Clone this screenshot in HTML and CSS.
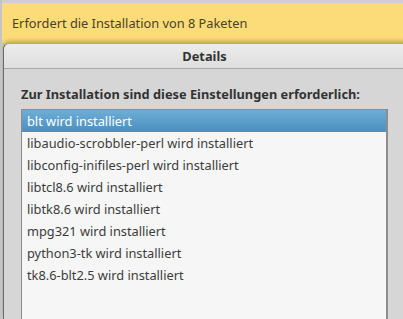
FILE: index.html
```html
<!DOCTYPE html>
<html lang="de">
<head>
    <meta charset="UTF-8">
    <meta name="viewport" content="width=device-width, initial-scale=1.0">
    <title>Details</title>
    <link rel="stylesheet" href="styles.css">
</head>
<body>
    <div class="infobar">Erfordert die Installation von 8 Paketen</div>
    <div class="dialog">
        <div class="titlebar">Details</div>
        <div class="content">
            <h2>Zur Installation sind diese Einstellungen erforderlich:</h2>
            <ul class="package-list">
                <li class="selected">blt wird installiert</li>
                <li>libaudio-scrobbler-perl wird installiert</li>
                <li>libconfig-inifiles-perl wird installiert</li>
                <li>libtcl8.6 wird installiert</li>
                <li>libtk8.6 wird installiert</li>
                <li>mpg321 wird installiert</li>
                <li>python3-tk wird installiert</li>
                <li>tk8.6-blt2.5 wird installiert</li>
            </ul>
        </div>
    </div>
</body>
</html>
```

FILE: styles.css
```css
html, body {
    margin: 0;
    padding: 0;
    height: 100%;
    overflow: hidden;
}
body {
    display: flex;
    flex-direction: column;
    font-family: "Noto Sans", "Open Sans", sans-serif;
    font-size: 12.8px;
    color: #3c3c3c;
    background-color: #cfcfcf;
    border-left: 2px solid #c4c4c4;
    box-sizing: border-box;
}
.infobar {
    margin-top: 3px;
    height: 40px;
    line-height: 40px;
    padding-left: 10px;
    background-color: #fcdc78;
    color: #4a4226;
}
.dialog {
    flex: 1;
    display: flex;
    flex-direction: column;
    min-height: 0;
    margin-left: 1px;
    margin-right: -6px;
    background-color: #d6d6d6;
    border-left: 1px solid #6a6a6a;
    border-top: 1px solid #a8a8a8;
    border-radius: 6px 6px 0 0;
    box-shadow: 0 -2px 4px rgba(0,0,0,0.25);
}
.titlebar {
    height: 24px;
    line-height: 24px;
    text-align: center;
    font-weight: bold;
    color: #333;
    background: linear-gradient(#ececec, #dedede);
    border-bottom: 1px solid #a9a9a9;
    border-radius: 6px 6px 0 0;
    padding-right: 4px;
}
.content {
    flex: 1;
    display: flex;
    flex-direction: column;
    min-height: 0;
    padding: 17px 20px 0 17px;
}
h2 {
    margin: 0 0 7px 0;
    font-size: 12.8px;
    line-height: 16px;
    font-weight: bold;
    color: #333;
}
.package-list {
    flex: 1;
    list-style: none;
    margin: 0;
    padding: 0;
    width: 364px;
    overflow: hidden;
    background-color: #f6f6f6;
    border: 1px solid #8d8d8d;
    border-right-width: 2px;
    border-bottom: none;
}
.package-list li {
    height: 22px;
    line-height: 22px;
    padding-left: 5px;
}
.package-list .selected {
    background: linear-gradient(#6eaed6, #4b8fc0);
    color: #fff;
}
```
